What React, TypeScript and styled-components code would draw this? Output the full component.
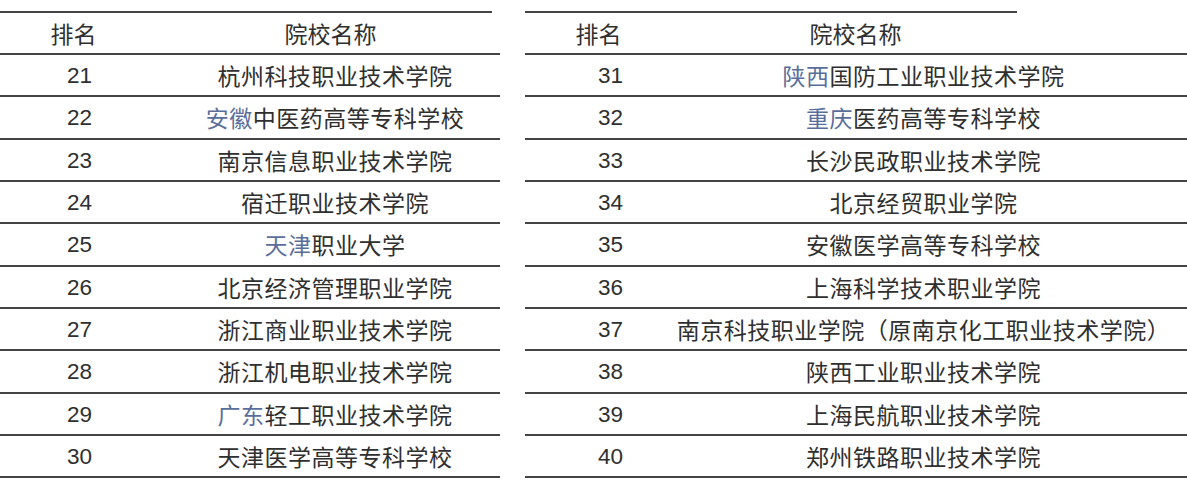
import React from "react";
import styled, { createGlobalStyle } from "styled-components";

const GlobalStyle = createGlobalStyle`
  html, body {
    margin: 0;
    padding: 0;
    background: #ffffff;
  }
  body {
    font-family: "Liberation Sans", "Noto Sans CJK SC", sans-serif;
    color: #2f2f2f;
  }
`;

type School = { rank: number; region?: string; rest: string };

const leftRows: School[] = [
  { rank: 21, rest: "杭州科技职业技术学院" },
  { rank: 22, region: "安徽", rest: "中医药高等专科学校" },
  { rank: 23, rest: "南京信息职业技术学院" },
  { rank: 24, rest: "宿迁职业技术学院" },
  { rank: 25, region: "天津", rest: "职业大学" },
  { rank: 26, rest: "北京经济管理职业学院" },
  { rank: 27, rest: "浙江商业职业技术学院" },
  { rank: 28, rest: "浙江机电职业技术学院" },
  { rank: 29, region: "广东", rest: "轻工职业技术学院" },
  { rank: 30, rest: "天津医学高等专科学校" },
];

const rightRows: School[] = [
  { rank: 31, region: "陕西", rest: "国防工业职业技术学院" },
  { rank: 32, region: "重庆", rest: "医药高等专科学校" },
  { rank: 33, rest: "长沙民政职业技术学院" },
  { rank: 34, rest: "北京经贸职业学院" },
  { rank: 35, rest: "安徽医学高等专科学校" },
  { rank: 36, rest: "上海科学技术职业学院" },
  { rank: 37, rest: "南京科技职业学院（原南京化工职业技术学院）" },
  { rank: 38, rest: "陕西工业职业技术学院" },
  { rank: 39, rest: "上海民航职业技术学院" },
  { rank: 40, rest: "郑州铁路职业技术学院" },
];

const Page = styled.div`
  display: flex;
  gap: 25px;
  padding-top: 11px;
`;

const Table = styled.div<{ $width: number }>`
  width: ${(p) => p.$width}px;
  display: flex;
  flex-direction: column;
`;

const TopRule = styled.div`
  width: 492px;
  border-top: 2px solid #444444;
`;

const HeaderRow = styled.div`
  height: 40px;
  display: flex;
  align-items: center;
  border-bottom: 2px solid #444444;
  font-size: 23px;
`;

const HeaderInner = styled.div`
  width: 492px;
  display: grid;
  grid-template-columns: 147px 1fr;
  align-items: center;
`;

const HeadCell = styled.div<{ $padLeft?: number }>`
  display: flex;
  justify-content: center;
  padding-left: ${(p) => p.$padLeft ?? 0}px;
  white-space: nowrap;
`;

const Row = styled.div<{ $rankWidth: number }>`
  height: 40.33px;
  display: grid;
  grid-template-columns: ${(p) => p.$rankWidth}px 1fr;
  align-items: center;
  border-bottom: 2px solid #444444;
`;

const RankCell = styled.div`
  display: flex;
  justify-content: center;
  font-size: 22.5px;
  padding-top: 2px;
`;

const NameCell = styled.div<{ $padLeft: number; $padRight: number }>`
  display: flex;
  justify-content: center;
  padding-left: ${(p) => p.$padLeft}px;
  padding-right: ${(p) => p.$padRight}px;
  font-size: 23px;
  letter-spacing: 0.5px;
  white-space: nowrap;
  min-width: 0;
`;

const Region = styled.span`
  color: #5a6e9b;
`;

type RankTableProps = {
  rows: School[];
  width: number;
  rankWidth: number;
  padLeft: number;
  padRight: number;
};

function RankTable({ rows, width, rankWidth, padLeft, padRight }: RankTableProps) {
  return (
    <Table $width={width}>
      <TopRule />
      <HeaderRow>
        <HeaderInner>
          <HeadCell>排名</HeadCell>
          <HeadCell $padLeft={22}>院校名称</HeadCell>
        </HeaderInner>
      </HeaderRow>
      {rows.map((r) => (
        <Row key={r.rank} $rankWidth={rankWidth}>
          <RankCell>{r.rank}</RankCell>
          <NameCell $padLeft={padLeft} $padRight={padRight}>
            <span>
              {r.region && <Region>{r.region}</Region>}
              {r.rest}
            </span>
          </NameCell>
        </Row>
      ))}
    </Table>
  );
}

export default function App() {
  return (
    <>
      <GlobalStyle />
      <Page>
        <RankTable rows={leftRows} width={500} rankWidth={159} padLeft={11} padRight={0} />
        <RankTable rows={rightRows} width={662} rankWidth={171} padLeft={0} padRight={36} />
      </Page>
    </>
  );
}
